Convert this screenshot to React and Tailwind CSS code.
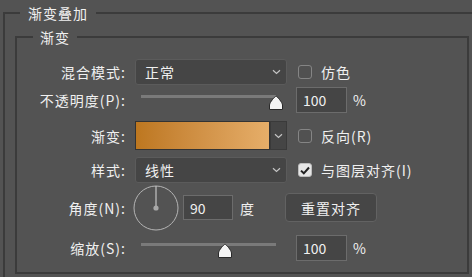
import React from "react";

const FONT = { fontFamily: '"Noto Sans CJK SC", "Noto Sans", sans-serif' };

const Chevron = () => (
  <svg width="9" height="6" viewBox="0 0 9 6">
    <path d="M1 1.2 L4.5 4.5 L8 1.2" stroke="#c4c4c4" strokeWidth="1.2" fill="none" />
  </svg>
);

const Thumb = () => (
  <svg width="16" height="16" viewBox="0 0 16 16">
    <path
      d="M8 1.2 C9 1.2 14.5 7.5 14.5 10 V14.5 H1.5 V10 C1.5 7.5 7 1.2 8 1.2 Z"
      fill="#f4f4f4"
      stroke="#2a2a2a"
      strokeWidth="1"
      strokeLinejoin="round"
    />
  </svg>
);

const Check = ({ checked }) => (
  <div
    className={
      "w-[14px] h-[14px] rounded-[3px] border flex items-center justify-center " +
      (checked ? "bg-[#e6e6e6] border-[#bdbdbd]" : "border-[#858585] bg-[#515151]")
    }
  >
    {checked && (
      <svg width="10" height="9" viewBox="0 0 10 9">
        <path d="M1 4.6 L3.8 7.3 L9 1.5" stroke="#222" strokeWidth="2" fill="none" />
      </svg>
    )}
  </div>
);

const Label = ({ children }) => (
  <div className="w-[109px] -mr-[1px] text-right shrink-0">{children}</div>
);

const Select = ({ value }) => (
  <div className="w-[152px] h-[26px] rounded-[3px] border border-[#5b5b5b] bg-[#454545] flex items-center pl-[9px] pr-[5px] justify-between">
    <span>{value}</span>
    <Chevron />
  </div>
);

const Slider = ({ pos }) => (
  <div className="relative w-[152px] h-full">
    <div className="absolute left-[6px] top-[8px] w-[135px] h-[3px] bg-[#7a7a7a]" />
    <div className="absolute top-[8px]" style={{ left: pos }}>
      <Thumb />
    </div>
  </div>
);

const NumInput = ({ value, w = 51, h = 26 }) => (
  <div
    className="border border-[#6c6c6c] bg-[#454545] flex items-center pl-[6px] tracking-normal"
    style={{ width: w, height: h }}
  >
    {value}
  </div>
);

export default function App() {
  return (
    <div
      className="w-[472px] h-[277px] bg-[#535353] overflow-hidden text-[14px] text-[#f0f0f0] leading-none tracking-[1px]"
      style={FONT}
    >
      <fieldset className="ml-[3px] mt-[1px] w-[490px] h-[300px] border-2 border-[#3b3b3b]">
        <legend className="ml-[15px] px-[8px] leading-[24px]">渐变叠加</legend>
        <fieldset className="ml-[10px] mt-[2px] w-[454px] h-[247px] border-2 border-[#3b3b3b] pt-[12px]">
          <legend className="ml-[16px] px-[7px] leading-[20px]">渐变</legend>

          {/* Row 1 */}
          <div className="flex items-center h-[26px]">
            <Label>混合模式:</Label>
            <div className="ml-[10px]">
              <Select value="正常" />
            </div>
            <div className="ml-[11px]">
              <Check />
            </div>
            <span className="ml-[9px]">仿色</span>
          </div>

          {/* Row 2 */}
          <div className="flex items-center h-[26px] mt-[2px]">
            <Label>不透明度(P):</Label>
            <div className="ml-[10px] h-full">
              <Slider pos={133} />
            </div>
            <div className="ml-[9px]">
              <NumInput value="100" />
            </div>
            <span className="ml-[6px]">%</span>
          </div>

          {/* Row 3 */}
          <div className="flex items-center h-[29px] mt-[8px]">
            <Label>渐变:</Label>
            <div className="ml-[10px] flex h-full">
              <div className="w-[135px] h-full border border-[#333] bg-gradient-to-r from-[#bd771f] to-[#e6ae69]" />
              <div className="w-[17px] h-full border border-[#3a3a3a] bg-[#454545] flex items-end justify-center pb-[10px]">
                <Chevron />
              </div>
            </div>
            <div className="ml-[11px]">
              <Check />
            </div>
            <span className="ml-[9px]">反向(R)</span>
          </div>

          {/* Row 4 */}
          <div className="flex items-center h-[26px] mt-[7px]">
            <Label>样式:</Label>
            <div className="ml-[10px]">
              <Select value="线性" />
            </div>
            <div className="ml-[11px]">
              <Check checked />
            </div>
            <span className="ml-[9px]">与图层对齐(I)</span>
          </div>

          {/* Row 5 */}
          <div className="flex items-center h-[45px] mt-[2px]">
            <Label>角度(N):</Label>
            <div className="ml-[8px]">
              <svg width="46" height="46" viewBox="0 0 46 46">
                <circle cx="23" cy="23" r="22" stroke="#b4b4b4" strokeWidth="1" fill="none" />
                <line x1="23" y1="1" x2="23" y2="22" stroke="#c4c4c4" strokeWidth="1.2" />
                <circle cx="23" cy="23" r="2.6" fill="#a8a8a8" />
              </svg>
            </div>
            <div className="ml-[4px]">
              <NumInput value="90" w={50} h={25} />
            </div>
            <span className="ml-[7px]">度</span>
            <div className="ml-[30px] w-[92px] h-[29px] rounded-[4px] border border-[#626262] bg-[#464646] flex items-center justify-center">
              重置对齐
            </div>
          </div>

          {/* Row 6 */}
          <div className="flex items-center h-[26px] mt-[5px]">
            <Label>缩放(S):</Label>
            <div className="ml-[10px] h-full">
              <Slider pos={82} />
            </div>
            <div className="ml-[9px]">
              <NumInput value="100" />
            </div>
            <span className="ml-[6px]">%</span>
          </div>
        </fieldset>
      </fieldset>
    </div>
  );
}
